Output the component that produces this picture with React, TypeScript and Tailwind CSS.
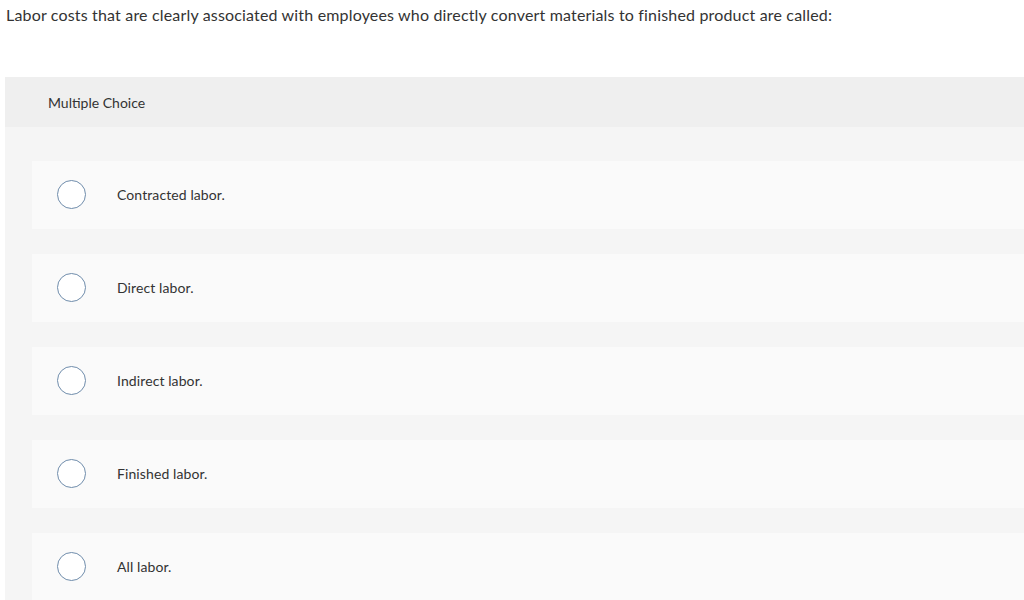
import React from "react";

const options = [
  "Contracted labor.",
  "Direct labor.",
  "Indirect labor.",
  "Finished labor.",
  "All labor.",
];

export default function App() {
  return (
    <div
      className="w-[1024px] h-[600px] overflow-hidden bg-white text-[#333333]"
      style={{ fontFamily: "Lato, 'Open Sans', sans-serif" }}
    >
      <div className="pl-[6px] pt-[5px] h-[77px] text-[16px] leading-[20px] tracking-[0.17px]">
        Labor costs that are clearly associated with employees who directly convert materials to finished product are called:
      </div>
      <div className="ml-[5px] bg-[#f5f5f5]">
        <div className="h-[50px] bg-[#efefef] pl-[43px] flex items-center text-[14px]">
          Multiple Choice
        </div>
        <div className="pt-[34px] pl-[27px] flex flex-col gap-[25px]">
          {options.map((o) => (
            <div key={o} className="h-[68px] bg-[#fafafa] flex items-center">
              <div className="ml-[25px] -mt-[1px] w-[29px] h-[29px] rounded-full border-[1.5px] border-[#6f8cab] bg-white" />
              <div className="ml-[31px] -mt-[1px] text-[14px] tracking-[0.1px]">{o}</div>
            </div>
          ))}
        </div>
      </div>
    </div>
  );
}
